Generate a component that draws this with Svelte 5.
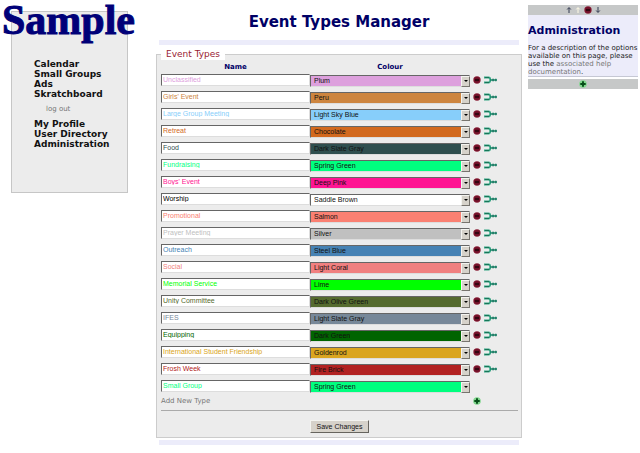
<script>
	const palette = {
		Plum: '#dda0dd',
		Peru: '#cd853f',
		'Light Sky Blue': '#87cefa',
		Chocolate: '#d2691e',
		'Dark Slate Gray': '#2f4f4f',
		'Spring Green': '#00ff7f',
		'Deep Pink': '#ff1493',
		'Saddle Brown': '#ffffff',
		Salmon: '#fa8072',
		Silver: '#c0c0c0',
		'Steel Blue': '#4682b4',
		'Light Coral': '#f08080',
		Lime: '#00ff00',
		'Dark Olive Green': '#556b2f',
		'Light Slate Gray': '#778899',
		'Dark Green': '#006400',
		Goldenrod: '#daa520',
		'Fire Brick': '#b22222'
	};
	const colours = Object.keys(palette);

	let types = $state([
		{ name: 'Unclassified', colour: 'Plum' },
		{ name: "Girls' Event", colour: 'Peru' },
		{ name: 'Large Group Meeting', colour: 'Light Sky Blue' },
		{ name: 'Retreat', colour: 'Chocolate' },
		{ name: 'Food', colour: 'Dark Slate Gray' },
		{ name: 'Fundraising', colour: 'Spring Green' },
		{ name: "Boys' Event", colour: 'Deep Pink' },
		{ name: 'Worship', colour: 'Saddle Brown' },
		{ name: 'Promotional', colour: 'Salmon' },
		{ name: 'Prayer Meeting', colour: 'Silver' },
		{ name: 'Outreach', colour: 'Steel Blue' },
		{ name: 'Social', colour: 'Light Coral' },
		{ name: 'Memorial Service', colour: 'Lime' },
		{ name: 'Unity Committee', colour: 'Dark Olive Green' },
		{ name: 'IFES', colour: 'Light Slate Gray' },
		{ name: 'Equipping', colour: 'Dark Green' },
		{ name: 'International Student Friendship', colour: 'Goldenrod' },
		{ name: 'Frosh Week', colour: 'Fire Brick' },
		{ name: 'Small Group', colour: 'Spring Green', fresh: true }
	]);

	// the white swatch would be unreadable as text
	const ink = (colour) => (colour === 'Saddle Brown' ? '#000' : palette[colour]);

	function add() {
		types.push({ name: '', colour: 'Plum', fresh: true });
	}
	function remove(i) {
		types.splice(i, 1);
	}
</script>

{#snippet minus()}
	<svg viewBox="0 0 8 8" width="8" height="8" aria-hidden="true">
		<circle cx="4" cy="4" r="3.7" fill="#8c2038" />
		<circle cx="4" cy="4" r="3" fill="#701028" />
		<path d="M2 4h4" stroke="#26040c" stroke-width="1.6" />
	</svg>
{/snippet}

{#snippet plus()}
	<svg viewBox="0 0 8 8" width="8" height="8" aria-hidden="true">
		<circle cx="4" cy="4" r="3.8" fill="#7fd68c" />
		<path d="M4 1.3v5.4M1.3 4h5.4" stroke="#064d18" stroke-width="1.9" />
	</svg>
{/snippet}

<div class="page">
	<aside class="side">
		<a class="logo" href="#home">Sample</a>
		<nav>
			<a href="#calendar">Calendar</a>
			<a href="#groups">Small Groups</a>
			<a href="#ads">Ads</a>
			<a href="#skratchboard">Skratchboard</a>
			<a class="logout" href="#logout">log out</a>
			<a href="#profile">My Profile</a>
			<a href="#directory">User Directory</a>
			<a href="#admin">Administration</a>
		</nav>
	</aside>

	<main>
		<h1>Event Types Manager</h1>
		<div class="bar"></div>
		<form onsubmit={(e) => e.preventDefault()}>
			<fieldset>
				<legend>Event Types</legend>
				<table>
					<colgroup>
						<col class="c-name" />
						<col class="c-colour" />
						<col class="c-tools" />
					</colgroup>
					<thead>
						<tr><th>Name</th><th>Colour</th><td></td></tr>
					</thead>
					<tbody>
						{#each types as type, i}
							<tr>
								<td>
									<input type="text" aria-label="Name" bind:value={type.name} style:color={ink(type.colour)} />
								</td>
								<td>
									<div class="pick">
										<select aria-label="Colour" bind:value={type.colour} style:background-color={palette[type.colour]}>
											{#each colours as colour}
												<option>{colour}</option>
											{/each}
										</select>
										<span class="arrow"></span>
									</div>
								</td>
								<td>
									{#if !type.fresh}
										<div class="tools">
											<button type="button" aria-label="Remove {type.name}" onclick={() => remove(i)}>{@render minus()}</button>
											<button type="button" aria-label="Merge {type.name}">
												<svg viewBox="0 0 13 8" width="13" height="8" fill="none" aria-hidden="true">
													<path d="M0 1.5h4.5q1.8 0 1.8 2.5t-1.8 2.5H0" stroke="#35a583" stroke-width="1.8" />
													<path d="M1 1.5h4M1 6.5h4" stroke="#187458" stroke-width="1" />
													<path d="M6 4h7" stroke="#178568" stroke-width="1.5" />
													<path d="M8.2 4h1.8M11 4h1.5" stroke="#237f68" stroke-width="2.6" />
												</svg>
											</button>
										</div>
									{/if}
								</td>
							</tr>
						{/each}
					</tbody>
					<tfoot>
						<tr>
							<td colspan="2">Add New Type</td>
							<td>
								<div class="tools">
									<button type="button" aria-label="Add new type" onclick={add}>{@render plus()}</button>
								</div>
							</td>
						</tr>
					</tfoot>
				</table>
				<hr />
				<button class="save" type="submit">Save Changes</button>
			</fieldset>
		</form>
		<div class="bar"></div>
	</main>

	<aside class="help">
		<div class="strip">
			<button type="button" aria-label="Move up">
				<svg viewBox="0 0 6 8" width="6" height="8" fill="none" stroke="#333a50" aria-hidden="true">
					<path d="M3 7V2M1.2 3.5 3 1.5l1.8 2" />
				</svg>
			</button>
			<button type="button" aria-label="Move to side">
				<svg viewBox="0 0 6 8" width="6" height="8" fill="none" stroke="#fffbe6" aria-hidden="true">
					<path d="M3 7V2M1.2 3.5 3 1.5l1.8 2" />
				</svg>
			</button>
			<button type="button" aria-label="Close">{@render minus()}</button>
			<button type="button" aria-label="Move down">
				<svg viewBox="0 0 6 8" width="6" height="8" fill="none" stroke="#333a50" aria-hidden="true">
					<path d="M3 1v5M1.2 4.5 3 6.5l1.8-2" />
				</svg>
			</button>
		</div>
		<section>
			<h2>Administration</h2>
			<p>For a description of the options available on this page, please use the <a href="#help">associated help documentation</a>.</p>
		</section>
		<div class="strip">
			<button type="button" aria-label="Add panel">{@render plus()}</button>
		</div>
	</aside>
</div>

<style>
	:global(body) {
		background: #fff;
		font-family: 'DejaVu Sans', Verdana, sans-serif;
	}
	.page {
		display: grid;
		grid-template-columns: 117px minmax(0, 1fr) 110px;
		align-items: start;
		padding: 5px 2px 8px 11px;
	}
	a {
		color: inherit;
		text-decoration: none;
	}
	button {
		padding: 0;
		border: 0;
		background: none;
		cursor: pointer;
	}
	svg {
		display: block;
	}

	.side {
		position: relative;
		margin-top: 6px;
		padding: 47px 0 43px 22px;
		box-sizing: border-box;
		background: #ececec;
		border: 1px solid #c6c6c6;
	}
	.logo {
		position: absolute;
		left: -10px;
		top: -12px;
		font: bold 42px/40px 'Liberation Serif', 'Times New Roman', serif;
		color: #000078;
		-webkit-text-stroke: 1px #000078;
	}
	nav {
		display: flex;
		flex-direction: column;
		font-size: 9px;
		font-weight: bold;
		line-height: 10px;
		color: #111;
	}
	.logout {
		margin: 5px 12px;
		font-size: 7px;
		font-weight: normal;
		color: #777;
	}

	main {
		margin: 0 6px 0 28px;
	}
	h1 {
		margin: 0;
		padding: 8px 0 9px;
		font-size: 15px;
		line-height: 18px;
		text-align: center;
		color: #000066;
	}
	.bar {
		height: 5px;
		margin: 0 3px;
		background: #ececfa;
	}
	fieldset {
		margin: 4px 0 2px;
		padding: 3px 3px 4px 4px;
		min-width: 0;
		background: #ececec;
		border: 1px solid #ccc;
	}
	legend {
		padding: 0 5px;
		background: #fff;
		font-size: 9px;
		line-height: 11px;
		color: #992233;
	}
	table {
		width: 100%;
		table-layout: fixed;
		border-collapse: collapse;
	}
	.c-name {
		width: 149px;
	}
	.c-tools {
		width: 48px;
	}
	th,
	td {
		padding: 0;
		height: 17px;
	}
	th {
		height: 8px;
		font-size: 7px;
		line-height: 8px;
		color: #000066;
	}
	thead td {
		height: 8px;
	}
	input,
	select {
		display: block;
		box-sizing: border-box;
		width: 100%;
		height: 12px;
		margin: 0;
		border: 1px solid;
		border-color: #666 #ddd #ddd #666;
		border-radius: 0;
		font: 7px/10px 'Liberation Sans', Arial, sans-serif;
	}
	input {
		padding: 0 1px;
		background: #fff;
	}
	select {
		appearance: none;
		padding: 0 12px 0 3px;
		color: #111;
	}
	.pick {
		position: relative;
		margin-top: 2px;
	}
	.arrow {
		position: absolute;
		top: 1px;
		right: 0;
		display: grid;
		place-items: center;
		box-sizing: border-box;
		width: 9px;
		height: 11px;
		background: #d6d2ca;
		border: 1px solid;
		border-color: #f4f4f0 #77746e #77746e #f4f4f0;
		pointer-events: none;
	}
	.arrow::after {
		content: '';
		border: 2px solid transparent;
		border-top-color: #000;
		border-bottom: 0;
	}
	.tools {
		display: flex;
		gap: 3px;
		padding-left: 3px;
	}
	tfoot td {
		height: 13px;
		font-size: 7px;
		line-height: 10px;
		color: #777;
	}
	hr {
		height: 1px;
		margin: 3px 0 8px;
		border: 1px solid #aaa;
		border-width: 1px 0 0;
	}
	.save {
		display: block;
		margin: 0 auto;
		padding: 0 6px;
		background: #d6d2ca;
		border: 1px solid;
		border-color: #f4f4f0 #66645e #66645e #f4f4f0;
		font: 7px/11px 'Liberation Sans', Arial, sans-serif;
		color: #111;
	}

	.strip {
		display: flex;
		justify-content: center;
		align-items: center;
		gap: 3px;
		height: 10px;
		background: #c6c8c8;
	}
	.help section {
		margin-bottom: 2px;
		padding-top: 8px;
		background: #ececfa;
		border-bottom: 1px solid #c6c8d4;
	}
	h2 {
		margin: 0 0 5px;
		font-size: 11px;
		line-height: 16px;
		color: #000066;
	}
	p {
		margin: 0;
		font-size: 7px;
		line-height: 8px;
		color: #222;
	}
	p a {
		color: #777;
	}
</style>
